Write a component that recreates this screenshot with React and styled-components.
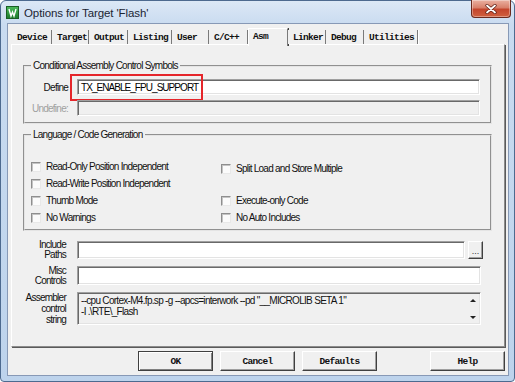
import React from 'react'
import styled, { createGlobalStyle } from 'styled-components'

const uiFont = `"Liberation Sans", Arial, sans-serif`
const monoFont = `"Liberation Mono", "Courier New", monospace`

const GlobalStyle = createGlobalStyle`
  html, body {
    margin: 0;
    padding: 0;
    background: #ffffff;
  }
  body {
    width: 515px;
    height: 382px;
    overflow: hidden;
  }
  * {
    box-sizing: border-box;
  }
`

const Window = styled.div`
  width: 515px;
  height: 382px;
  display: flex;
  flex-direction: column;
  border: 1px solid #4d6a8f;
  border-radius: 6px 6px 4px 4px;
  background: linear-gradient(180deg, #dce8f6 0%, #c9dbf0 24px, #bdd3ec 100%);
`

const TitleBar = styled.div`
  height: 22px;
  flex-shrink: 0;
  display: flex;
  align-items: center;
  padding-left: 5px;
`

const AppIcon = styled.svg`
  width: 13px;
  height: 13px;
  margin-right: 5px;
  margin-top: 1px;
`

const Title = styled.span`
  font-family: "Liberation Sans", Arial, sans-serif;
  font-size: 11.5px;
  letter-spacing: -0.1px;
  color: #1b2533;
  margin-top: 1px;
`

const CloseButton = styled.div`
  margin-left: auto;
  margin-right: 3px;
  align-self: flex-start;
  margin-top: -1px;
  width: 40px;
  height: 18px;
  display: flex;
  align-items: center;
  justify-content: center;
  border: 1px solid #6b2a1e;
  border-top: none;
  border-radius: 0 0 4px 4px;
  background: linear-gradient(180deg, #eab1a2 0%, #d8806b 45%, #c4452d 55%, #d0613f 100%);
  box-shadow: inset 0 0 0 1px rgba(255, 255, 255, 0.35);
`

const Client = styled.div`
  flex: 1;
  margin: 0 5px 5px 6px;
  border: 1px solid #8799b6;
  background: #f0f0f0;
  display: flex;
  flex-direction: column;
  padding: 4px 3px 0 3px;
`

const TabStrip = styled.div`
  display: flex;
  align-items: flex-end;
  height: 16px;
  padding-left: 1px;
  position: relative;
  z-index: 1;
`

const Tab = styled.div`
  width: ${p => p.w}px;
  height: ${p => (p.active ? 18 : 14)}px;
  margin-bottom: ${p => (p.active ? -2 : 0)}px;
  padding-left: ${p => (p.active ? 4 : 5)}px;
  padding-bottom: ${p => (p.active ? 2 : 0)}px;
  display: flex;
  align-items: center;
  font-family: ${monoFont};
  font-weight: bold;
  font-size: 9.5px;
  letter-spacing: -0.7px;
  color: #101010;
  background: #f0f0f0;
  border-right: 1px solid #7a7a7a;
  border-left: ${p => (p.active ? '1px solid #ffffff' : 'none')};
  border-top: ${p => (p.active ? '1px solid #ffffff' : 'none')};
  box-shadow: ${p => (p.active ? '1px 0 0 #404040' : '1px 0 0 #ffffff')};
  white-space: nowrap;
`

const Panel = styled.div`
  height: 303px;
  flex-shrink: 0;
  display: flex;
  flex-direction: column;
  padding-top: 15px;
  border: 1px solid;
  border-color: #ffffff #8c8c8c #8c8c8c #ffffff;
  box-shadow: 1px 1px 0 #5a5a5a;
`

const Group = styled.fieldset`
  margin: ${p => p.top || 0}px 12px 0 11px;
  padding: ${p => p.pad};
  border: 2px groove #e4e4e4;
  min-width: 0;
`

const Legend = styled.legend`
  margin-left: 6px;
  padding: 0 2px;
  font-family: ${uiFont};
  font-size: 10px;
  letter-spacing: -0.75px;
  line-height: 12px;
  color: #111;
`

const FieldRow = styled.div`
  display: flex;
  align-items: center;
  gap: 9px;
  position: relative;
  margin-top: ${p => p.top || 0}px;
`

const FieldLabel = styled.span`
  width: 43px;
  text-align: right;
  white-space: nowrap;
  font-family: ${uiFont};
  font-size: 10px;
  letter-spacing: -0.75px;
  color: ${p => (p.disabled ? '#a0a0a0' : '#111')};
`

const Input = styled.div`
  flex: 1;
  height: ${p => p.h || 16}px;
  display: flex;
  align-items: center;
  padding-left: 3px;
  font-family: ${uiFont};
  font-size: 10px;
  letter-spacing: -0.95px;
  color: #000;
  background: ${p => (p.disabled ? '#f0f0f0' : '#ffffff')};
  border: 1px solid;
  border-color: #a0a0a0 #ffffff #ffffff #a0a0a0;
  box-shadow: inset 1px 1px 0 #696969, inset -1px -1px 0 #e3e3e3;
`

const Highlight = styled.div`
  position: absolute;
  left: 45px;
  top: -5px;
  width: 133px;
  height: 27px;
  border: 2px solid #e5262b;
  pointer-events: none;
`

const CheckGrid = styled.div`
  display: grid;
  grid-template-columns: 190px 1fr;
  grid-auto-rows: 17px;
  padding-left: 6px;
`

const CheckItem = styled.label`
  display: flex;
  align-items: center;
  gap: 5px;
  font-family: ${uiFont};
  font-size: 10px;
  letter-spacing: -0.75px;
  color: #111;
  transform: translateY(${p => p.shift || 0}px);
`

const Box = styled.span`
  width: 10px;
  height: 10px;
  flex-shrink: 0;
  background: #fbfbfb;
  border: 1px solid;
  border-color: #8e8e8e #e8e8e8 #e8e8e8 #8e8e8e;
  box-shadow: inset 1px 1px 0 #c4c4c4;
`

const Form = styled.div`
  display: grid;
  grid-template-columns: 54px 1fr;
  grid-template-rows: 18px 19px 33px;
  column-gap: 11px;
  row-gap: 7px;
  margin-top: 10px;
  padding-right: 23px;
`

const FormLabel = styled.div`
  align-self: center;
  text-align: right;
  font-family: ${uiFont};
  font-size: 10px;
  letter-spacing: -0.75px;
  line-height: ${p => p.lh || 10}px;
  color: #111;
`

const InputWithButton = styled.div`
  display: flex;
  gap: 3px;
  margin-right: -2px;
`

const BrowseButton = styled.div`
  width: 15px;
  height: 18px;
  display: flex;
  align-items: flex-end;
  justify-content: center;
  padding-bottom: 4px;
  font-family: ${uiFont};
  font-size: 9px;
  line-height: 6px;
  color: #333;
  background: #f0f0f0;
  border: 1px solid;
  border-color: #ffffff #404040 #404040 #ffffff;
  box-shadow: inset -1px -1px 0 #a0a0a0;
`

const TextBox = styled.div`
  display: flex;
  background: #f0f0f0;
  border: 1px solid;
  border-color: #a0a0a0 #ffffff #ffffff #a0a0a0;
  box-shadow: inset 1px 1px 0 #696969, inset -1px -1px 0 #e3e3e3;
`

const TextContent = styled.div`
  flex: 1;
  padding: 2px 0 0 3px;
  font-family: ${uiFont};
  font-size: 10px;
  letter-spacing: -0.7px;
  line-height: 11px;
  white-space: pre;
  color: #111;
`

const ScrollColumn = styled.div`
  width: 13px;
  display: flex;
  flex-direction: column;
  justify-content: space-between;
  align-items: center;
  padding: 6px 0 5px;
  margin-right: 1px;
`

const Arrow = styled.span`
  width: 0;
  height: 0;
  border-left: 3px solid transparent;
  border-right: 3px solid transparent;
  border-bottom: ${p => (p.up ? '3px solid #222' : 'none')};
  border-top: ${p => (p.up ? 'none' : '3px solid #222')};
`

const ButtonRow = styled.div`
  display: flex;
  gap: 7px;
  margin-top: 4px;
  padding-left: 127px;
`

const DialogButton = styled.div`
  width: 75px;
  height: 20px;
  display: flex;
  align-items: center;
  justify-content: center;
  margin-left: ${p => (p.pushRight ? 'auto' : 0)};
  font-family: ${monoFont};
  font-weight: bold;
  font-size: 9.5px;
  letter-spacing: -0.7px;
  color: #101010;
  background: #f0f0f0;
  border: 1px solid;
  border-color: ${p => (p.primary ? '#404040' : '#ffffff #404040 #404040 #ffffff')};
  box-shadow: ${p =>
    p.primary
      ? 'inset 1px 1px 0 #ffffff, inset -1px -1px 0 #808080'
      : 'inset -1px -1px 0 #a0a0a0'};
`

const tabs = [
  { label: 'Device', w: 40 },
  { label: 'Target', w: 37 },
  { label: 'Output', w: 39 },
  { label: 'Listing', w: 44 },
  { label: 'User', w: 37 },
  { label: 'C/C++', w: 39 },
  { label: 'Asm', w: 40, active: true },
  { label: 'Linker', w: 38 },
  { label: 'Debug', w: 38 },
  { label: 'Utilities', w: 54 },
]

const checks = [
  { label: 'Read-Only Position Independent' },
  { label: 'Split Load and Store Multiple', shift: 2 },
  { label: 'Read-Write Position Independent' },
  null,
  { label: 'Thumb Mode' },
  { label: 'Execute-only Code' },
  { label: 'No Warnings' },
  { label: 'No Auto Includes' },
]

const App = () => (
  <>
    <GlobalStyle />
    <Window>
      <TitleBar>
        <AppIcon viewBox="0 0 13 13">
          <defs>
            <linearGradient id="ig" x1="0" y1="0" x2="0" y2="1">
              <stop offset="0" stopColor="#4cbb5a" />
              <stop offset="1" stopColor="#1c7a2c" />
            </linearGradient>
          </defs>
          <rect x="0.5" y="0.5" width="12" height="12" fill="url(#ig)" stroke="#1a5e25" />
          <path d="M3 3 L5 10 L6.5 6 L8 10 L10 3" fill="none" stroke="#fff" strokeWidth="1.4" />
        </AppIcon>
        <Title>Options for Target 'Flash'</Title>
        <CloseButton>
          <svg width="12" height="10" viewBox="0 0 12 10">
            <path d="M2 1.5 L10 8.5 M10 1.5 L2 8.5" stroke="#5a1a10" strokeWidth="3.2" strokeLinecap="round" />
            <path d="M2 1.5 L10 8.5 M10 1.5 L2 8.5" stroke="#ffffff" strokeWidth="1.8" strokeLinecap="round" />
          </svg>
        </CloseButton>
      </TitleBar>

      <Client>
        <TabStrip>
          {tabs.map(t => (
            <Tab key={t.label} w={t.w} active={t.active}>{t.label}</Tab>
          ))}
        </TabStrip>

        <Panel>
          <Group pad="7px 10px 6px 0">
            <Legend>Conditional Assembly Control Symbols</Legend>
            <FieldRow>
              <FieldLabel>Define</FieldLabel>
              <Input>TX_ENABLE_FPU_SUPPORT</Input>
              <Highlight />
            </FieldRow>
            <FieldRow top={5}>
              <FieldLabel disabled>Undefine:</FieldLabel>
              <Input disabled />
            </FieldRow>
          </Group>

          <Group top={5} pad="17px 0 3px 0">
            <Legend>Language / Code Generation</Legend>
            <CheckGrid>
              {checks.map((c, i) =>
                c ? (
                  <CheckItem key={i} shift={c.shift}>
                    <Box />
                    {c.label}
                  </CheckItem>
                ) : (
                  <span key={i} />
                )
              )}
            </CheckGrid>
          </Group>

          <Form>
            <FormLabel>Include<br />Paths</FormLabel>
            <InputWithButton>
              <Input h={18} />
              <BrowseButton>...</BrowseButton>
            </InputWithButton>

            <FormLabel>Misc<br />Controls</FormLabel>
            <Input h={19} />

            <FormLabel lh={11}>Assembler<br />control<br />string</FormLabel>
            <TextBox>
              <TextContent>
                {'--cpu Cortex-M4.fp.sp -g --apcs=interwork --pd "__MICROLIB SETA 1"\n-I .\\RTE\\_Flash'}
              </TextContent>
              <ScrollColumn>
                <Arrow up />
                <Arrow />
              </ScrollColumn>
            </TextBox>
          </Form>
        </Panel>

        <ButtonRow>
          <DialogButton primary>OK</DialogButton>
          <DialogButton>Cancel</DialogButton>
          <DialogButton>Defaults</DialogButton>
          <DialogButton pushRight>Help</DialogButton>
        </ButtonRow>
      </Client>
    </Window>
  </>
)

export default App
